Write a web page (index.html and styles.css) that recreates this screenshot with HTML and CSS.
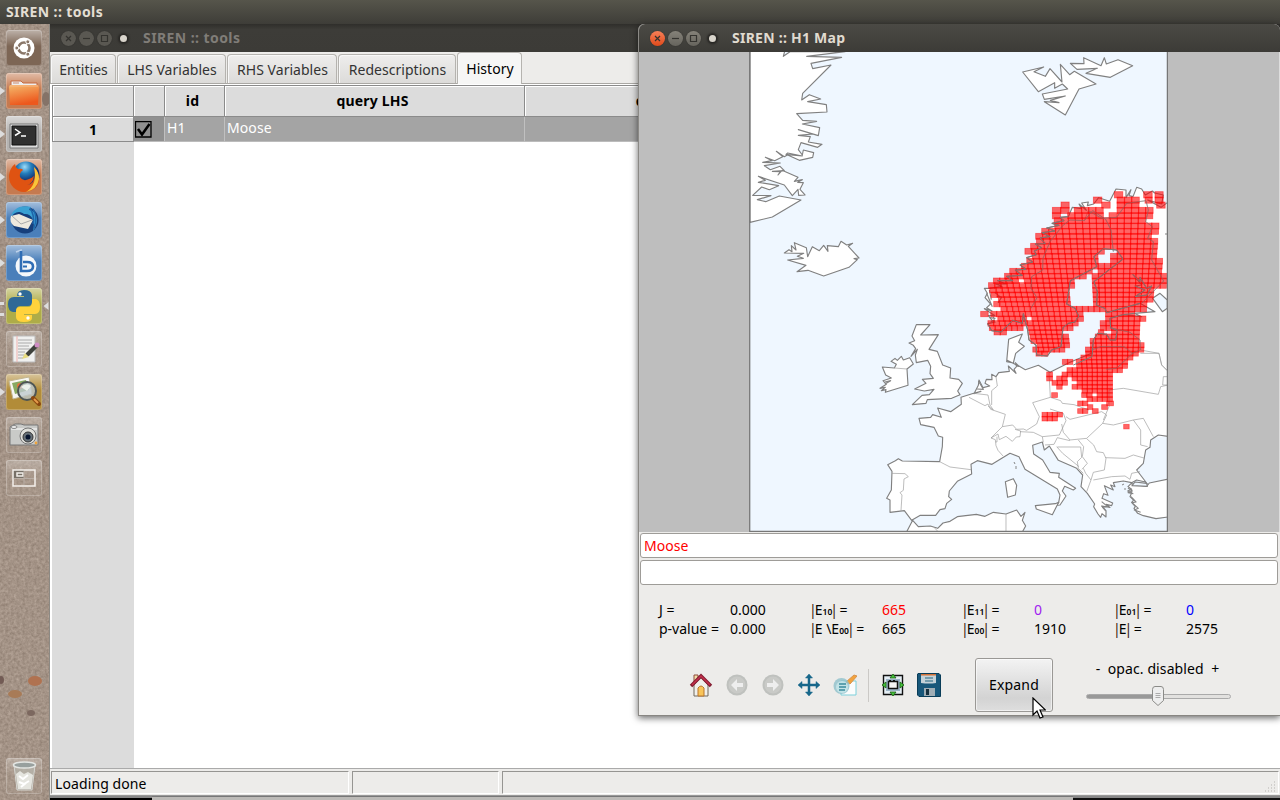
FILE: index.html
```html
<!DOCTYPE html>
<html lang="en">
<head>
<meta charset="utf-8">
<title>SIREN :: tools</title>
<link rel="stylesheet" href="styles.css">
</head>
<body>
<header class="panel">SIREN :: tools</header>
<div class="desktop">
  <nav class="launcher">
    <svg class="sand" width="49" height="776"><filter id="grain" x="0" y="0" width="100%" height="100%" color-interpolation-filters="sRGB"><feTurbulence type="fractalNoise" baseFrequency=".35" numOctaves="3" seed="4"/><feColorMatrix values=".2 0 0 0 .54  .2 0 0 0 .475  .2 0 0 0 .425  0 0 0 0 1"/></filter><rect width="49" height="776" filter="url(#grain)"/><g fill="#b07250"><ellipse cx="35" cy="657" rx="7" ry="5"/><ellipse cx="15" cy="670" rx="7" ry="4" fill="#a87b57"/><ellipse cx="31" cy="689" rx="4" ry="3" fill="#7c685f"/><ellipse cx="1" cy="656" rx="3" ry="4" fill="#725b54"/><ellipse cx="46" cy="75" rx="4" ry="7" fill="#857368"/></g></svg>
    <div class="tile dash"><svg viewBox="0 0 36 36"><circle cx="18" cy="18" r="10.5" fill="#fff"/><circle cx="18" cy="18" r="5.5" fill="none" stroke="#8a7769" stroke-width="2.6"/><path d="M18 18H11M18 18l4-6.5M18 18l4 6.5" stroke="#fff" stroke-width="1.3"/><g fill="#8a7769" stroke="#fff"><circle cx="10.8" cy="18" r="2"/><circle cx="21.8" cy="11.8" r="2"/><circle cx="21.8" cy="24.2" r="2"/></g></svg></div>
    <div class="tile orange run"><svg viewBox="0 0 36 36"><path d="M5 8h10l2 2h14v7H5z" fill="#eee" stroke="#c66b40"/><path d="M7 10h6" stroke="#cc8b70"/><path d="M3 14q0-2 2-2h26q2 0 2 2l-1 18H4z" fill="url(#fold)"/><path d="M4 13h28" stroke="#f8b787"/></svg></div>
    <div class="tile silver run"><svg viewBox="0 0 36 36"><path d="M4 8h28v24H4z" fill="#ddd" stroke="#777"/><path d="M6 10h24v19H6z" fill="#303030" stroke="#111"/><path d="M9 13l5 3.500-5 3M15 20h5" fill="none" stroke="#fff" stroke-width="1.5"/></svg></div>
    <div class="tile orange run"><svg viewBox="0 0 36 36"><circle cx="20" cy="16" r="13.500" fill="url(#globe)"/><path d="M9 5q0 3 3 5 4-1 5 1-4 3-3 7 3 5 9 2 3-1 5-3-1 8-7 9 8-1 8-12l-1-6q5 5 5 12c0 8-7 13-15 13S3 26 3 18c0-6 3-11 6-13z" fill="#df5312"/><path d="M28 8q5 5 5 12-2 11-13 13 12-7 8-25z" fill="#f8c53a"/></svg></div>
    <div class="tile blue run"><svg viewBox="0 0 36 36"><circle cx="19" cy="18" r="13.500" fill="#173f7b"/><path d="M5 15C7 5 17 3 25 5l-2 3c8 0 11 12 4 21 3-11-2-18-9-17C12 8 8 11 5 15z" fill="#3aa1d3"/><path d="M5 14l8-2 14 6-5 9-14-3Q3 20 5 14z" fill="#eee9de"/><path d="M6 14l9 8 11-4" fill="none" stroke="#aaa"/><path d="M27 7q5 8 1 19M24 6q5 8 3 16" fill="none" stroke="#1f65aa" stroke-width="1.5"/></svg></div>
    <div class="tile blue run"><svg viewBox="0 0 36 36"><circle cx="20" cy="21" r="10.500" fill="#f4f7fa"/><path d="M10 7l5-2v15" fill="none" stroke="#bdd2ea" stroke-width="1.500"/><path d="M15 6v20h6q6 0 6-4.500T21 17h-4" fill="none" stroke="#2f6db5" stroke-width="2.600"/><path d="M17 21.500h4" fill="none" stroke="#2f6db5" stroke-width="2"/></svg></div>
    <div class="tile olive run twin"><svg viewBox="0 0 36 36"><path d="M11 8q0-6 7-6t8 5v7q0 4-4 4h-8q-4 0-4 6H7q-5-1-5-8t6-7h10v-1h-7z" fill="#2f6997"/><path d="M26 11h4q4 1 4 8t-5 7H18v1h8v3q0 4-8 4t-8-5v-6q0-4 4-4h8q4 0 4-5z" fill="#ffd23c"/><circle cx="14" cy="6" r="1.700" fill="#fff"/><circle cx="22" cy="30" r="1.700" fill="#fff"/><path d="M42.500 14v8l-5-4z" fill="#ddd"/></svg></div>
    <div class="tile clear"><svg viewBox="0 0 36 36"><path d="M7 5h22v26H7z" fill="#f0f0ef" stroke="#bbb"/><path d="M11 5v26" stroke="#f0b3af"/><path d="M12 9h14M12 12h14M12 15h11M12 18h12M12 21h7M12 24h6M12 27h5" stroke="#aaa"/><path d="M17 27l3-5 9-9 3 3-9 9z" fill="#3e413c"/><path d="M16 28l3-6 4 4z" fill="#e8dc80"/><circle cx="31" cy="14" r="2.500" fill="#cf8dc4"/></svg></div>
    <div class="tile amber run"><svg viewBox="0 0 36 36"><path d="M3 7l20-4 3 17-19 5z" fill="#f7f7f2" stroke="#c2b691"/><path d="M6 9l14-3 3 10-14 4z" fill="#88a961"/><circle cx="14" cy="12" r="3" fill="#e4723a"/><circle cx="21" cy="17" r="9" fill="#bdc9cdc9" stroke="#4e5554" stroke-width="2"/><path d="M15 13q5-5 10-1l-4 5z" fill="#edf2eb"/><path d="M27 24l6 6" stroke="#8a470f" stroke-width="4" stroke-linecap="round"/><path d="M28 25l4 4" stroke="#e49b4a" stroke-width="2"/></svg></div>
    <div class="tile clear"><svg viewBox="0 0 36 36"><path d="M4 10l5-3h6l3 1h14v20H4z" fill="#c9cac8" stroke="#777"/><path d="M5 12h26" stroke="#fff"/><circle cx="22" cy="19" r="8" fill="#deded9" stroke="#777"/><circle cx="22" cy="20" r="5" fill="#667077" stroke="#333"/><circle cx="22" cy="20" r="2.500" fill="#06132c"/><circle cx="30" cy="26" r="1.400" fill="#f0a33a"/><ellipse cx="8" cy="10" rx="3" ry="1.500" fill="#eee" stroke="#888"/></svg></div>
    <div class="tile clear"><svg viewBox="0 0 36 36"><path d="M7 10h11v9H7z" fill="#777067"/><path d="M7 10h22v16H7zM11 13h6v3h-6z" fill="none" stroke="#f4f0eb" stroke-width="1.500"/><path d="M18 11v14M8 18.500h20" stroke="#b9aea5"/></svg></div>
    <div class="tile clear trash"><svg viewBox="0 0 36 36"><path d="M8 7l3 25h15l3-25" fill="#b9bbb3a0" stroke="#d5d5d0"/><path d="M10 16l4-3 4 3 4-2 5 3-2 14H12z" fill="#e5e5df"/><path d="M13 18l4 3 5-4M13 24l5 2 5-3M15 29l5-4" fill="none" stroke="#fff" stroke-width="2"/><ellipse cx="18.500" cy="7" rx="11" ry="3" fill="#98a09e" stroke="#e4e6e3" stroke-width="1.500"/></svg></div>
    <svg class="defs" width="0" height="0"><defs><linearGradient id="fold" x2=".3" y2="1"><stop stop-color="#f4b96c"/><stop offset="1" stop-color="#ed581d"/></linearGradient><radialGradient id="globe" cx=".45" cy=".2"><stop stop-color="#9edcf8"/><stop offset=".5" stop-color="#247dbb"/><stop offset="1" stop-color="#123878"/></radialGradient></defs></svg>
  </nav>

  <main class="tools">
    <div class="titlebar inactive">
      <span class="wb"><svg viewBox="0 0 15 15"><path d="M5 5l5 5M10 5l-5 5"/></svg></span><span class="wb"><svg viewBox="0 0 15 15"><path d="M4 7.500h7"/></svg></span><span class="wb"><svg viewBox="0 0 15 15"><path d="M4.500 4.500h6v6h-6z"/></svg></span><span class="dot"></span>
      <span class="caption">SIREN :: tools</span>
    </div>
    <div class="tabs"><span class="tab t1">Entities</span><span class="tab t2">LHS Variables</span><span class="tab t3">RHS Variables</span><span class="tab t4">Redescriptions</span><span class="tab t5 on">History</span></div>
    <section class="page">
      <div class="grid">
        <div class="h"></div><div class="h"></div><div class="h">id</div><div class="h">query LHS</div><div class="h">query RHS</div><div class="h"></div>
        <div class="rl">1</div><div class="c ck"><svg viewBox="0 0 17 17"><path d="M.5 .500h15.500v15.500H.5z" fill="none" stroke="#000" stroke-width="1.300"/><path d="M3 8l4 5.500L14.500 3" fill="none" stroke="#000" stroke-width="2.500"/></svg></div><div class="c">H1</div><div class="c">Moose</div><div class="c"></div><div class="c"></div>
      </div>
      <div class="gutter"></div>
    </section>
    <footer class="status"><span class="s1">Loading done</span><span class="s2"></span><span class="s3"><svg viewBox="0 0 12 12"><path d="M10 1h1M7 4h1m2 0h1M4 7h1m2 0h1m2 0h1M1 10h1m2 0h1m2 0h1m2 0h1" stroke="#b5b3b0"/></svg></span></footer>
    <div class="below"><i class="b1"></i><i class="b2"></i><i class="b3"></i></div>
  </main>
</div>

<section class="mapwin">
  <div class="titlebar">
    <span class="wb close"><svg viewBox="0 0 15 15"><path d="M5 5l5 5M10 5l-5 5"/></svg></span><span class="wb"><svg viewBox="0 0 15 15"><path d="M4 7.500h7"/></svg></span><span class="wb"><svg viewBox="0 0 15 15"><path d="M4.500 4.500h6v6h-6z"/></svg></span><span class="dot"></span>
    <span class="caption">SIREN :: H1 Map</span>
  </div>
  <div class="canvas">
    <svg class="map" width="419" height="480" viewBox="749 52 419 480">
      <rect x="749" y="52" width="419" height="480" fill="#eff7ff"/>
      <!-- Greenland, Iceland -->
      <g class="coast" transform="translate(745 50) scale(.33333)">
        <path d="M15 0H120L115 19L135 5H300L185 19L290 22L198 40L203 56L258 45L173 130L170 150L193 134L227 147L188 155L244 164L246 186L155 191L173 211L215 214L172 222L224 233L220 257L160 239L203 252L160 256L196 260L190 276L231 283L218 292L168 278L160 299L172 315L175 300L206 308L203 322L163 331L123 313L128 309L172 318L128 314L118 320L94 304L113 320L89 332L61 322L81 332L53 337L106 339L58 347L76 359L105 349L118 362L82 364L106 365L99 375L111 361L159 382L148 394L172 389L158 397L175 398L165 418L180 435L161 436L159 418L142 437L118 405L40 379L61 391L40 397L101 407L73 419L50 411L23 436L78 437L37 449L62 455L103 438L168 450L82 501L15 517Z"/>
        <path d="M118 609L132 599L141 605L139 587L153 600L148 578L184 593L188 620L202 590L223 602L236 586L249 604L247 587L280 590L288 574L305 585L323 580L310 589L342 624L327 626L337 629L312 652L236 678L189 661L156 665L183 646L128 630L175 625L157 619L176 610L118 609Z"/>
      </g>
      <!-- Svalbard -->
      <g class="coast" transform="translate(955 50) scale(.33333)">
        <path d="M203 66L266 51L237 65L271 79L285 56L321 96L316 43L344 74L358 64L423 102L372 117L331 195L268 155L312 158L286 151L331 138L268 148L262 132L338 117L322 102L299 115V98L250 125Z"/>
        <path d="M346 40L387 41L386 23L438 47L448 23L454 42L489 29L533 47L466 82L393 70L427 55L366 58Z"/>
      </g>
      <!-- Scandinavia and the Baltic -->
      <g class="coast" transform="translate(960 180) scale(.33333)">
        <path d="M700 66L622 68L603 82L563 60L605 72L610 45L584 39L577 33L556 45L545 27L530 22L519 50L507 47L513 29L498 53V30L468 27L449 64L416 53L401 72L382 77L385 66L365 69L379 91L357 72L365 86L337 82L325 110L300 112L312 122L276 130L297 136L260 144L285 153L246 158L270 170L240 174L256 191L226 192L245 203L223 213L229 224L200 233L218 246L180 255L198 268L166 270L187 286L140 289L158 302L113 302L139 312L107 312L126 319L91 325H73L82 340L75 353L92 372L80 383L96 393L73 386L105 407L85 407L101 427L83 431L95 452L123 456L158 421L187 430L190 401L203 450L207 480L228 495L230 525L262 528L275 510L303 500L309 443L325 430L345 426L356 408L345 385L320 372L331 302L410 260L402 230L430 206L470 210L489 237L402 305L412 335L410 376L435 385L440 398L540 370L585 395L523 400L545 410L490 404L450 415L452 443L472 452L467 480L450 480L440 463L413 460L400 480L396 530L365 555L360 580H700Z"/>
        <path d="M578 355L600 340L622 360V385L607 395Z" fill="#eff7ff"/>
        <path class="noedge" d="M400 540H700V770H560z"/>
        <g class="border"><path d="M213 385L231 353L213 325L215 290L248 270L249 235L270 185L307 138L330 120L373 122L398 92L437 118L453 150L460 215M373 122L385 92L425 115L470 112L500 70L558 62L565 90L557 125L577 140L563 175L580 185L575 240L611 303L545 370M450 443L510 457L540 480L541 510L517 520L492 500H422L395 510M517 520L470 565L438 568M541 510L597 520L605 555L622 572"/></g>
        <path class="lake" d="M518 283L540 305L540 292L560 325L575 318L561 345L525 350L555 330L525 318L545 315L518 283M88 330L94 359M80 340L97 380M89 413L105 415L92 427M100 410L105 429M104 337L124 353L114 369M110 349L126 351"/>
      </g>
      <!-- Mainland, British Isles, Africa -->
      <g class="coast" transform="translate(870 310) scale(.33333)">
        <path d="M665 130L600 157L540 187L505 166L466 179L443 166L432 178L438 190L415 168L418 184L386 188L378 200L365 193L366 209L349 208L345 220L359 228L339 233L327 210L325 226L312 251L333 244L311 250L273 262L274 283L242 305L203 294L214 322L188 314L182 322L147 325L152 344L192 352L205 378L218 382L217 410L209 455L97 453L85 446L76 452L53 464L66 484L64 540L50 565L60 570V607L103 602L125 631L151 616H197L210 599L225 596L230 580L245 568L236 560L238 543L262 514L305 492L303 463L322 452L366 463L420 430L447 440L465 478L562 537L570 555L566 578L557 586L570 585L588 558L577 543L584 529L610 540L617 535L566 502L568 490L540 487L518 450L491 432L488 406L517 396L523 420L538 408L565 451L620 475L638 495L633 530L652 550L674 582L671 590L684 612L692 622L696 611L708 621L708 602L695 588L720 592L708 583L725 587L728 579L696 565L701 551L714 556L703 527L730 540L722 525L735 530L730 518L760 513L785 518L800 510L826 516L832 522L800 480L820 460L827 420L840 412L842 390L865 375L900 380"/>
        <path d="M139 44H180L152 75L205 74L177 118L202 124L218 165L242 174L240 204L266 208L277 220L263 243L270 254L245 265L172 269L168 280L127 284L156 256L178 254L192 238L163 243L134 237L168 220L157 208L190 205L180 191L182 169L173 151L139 158L136 135L142 118L123 139L137 116L130 106L117 99L134 92L126 78Z"/>
        <path d="M63 154L75 145L82 151L94 139L100 150L119 143L130 162L111 177L114 226L46 247L48 239L34 242L46 232L30 235L49 223L39 212L64 204L47 195L37 171L73 174L79 163Z"/>
        <path d="M457 72L416 88L410 155L430 159L437 130L463 109L446 97ZM437 166L447 169L435 157M410 150L444 167"/>
        <path d="M406 515L430 506L440 526L436 555L413 562ZM496 587L556 581L566 577L547 614L499 597Z"/>
        <path d="M105 675L128 631L145 650L181 648L203 655L219 639L240 634L262 620L319 613L345 619L370 607L408 612L440 600L453 619L465 607L457 631L467 648L452 675Z"/>
        <path d="M774 530L783 521L830 529L838 519L900 506V620L858 626L820 617L803 610L792 595L796 590L785 577L791 570L780 560L785 548L773 543L785 538Z"/>
        <path d="M786 527L795 516L830 520L832 529Z" fill="#eff7ff"/>
        <path class="lake" d="M783 560L798 576L786 578L805 595L793 600L812 607M774 534L787 543L774 548L790 551M695 575L712 589L698 592L707 603M45 222L62 212L45 216M325 213L340 238L321 237"/>
        <g class="border"><path d="M66 490L105 491L115 500L102 507L100 541L90 548L96 555L93 602M209 455L240 471L303 479M297 262L345 287L354 282L362 298M311 250L354 255L360 285L370 300L354 288M378 200L382 228L365 242V285M362 298L406 313L397 350L363 384L376 389L378 407L384 421L399 438M381 380V396H377M397 350L428 345L440 358L460 357L470 361L500 342L508 320L488 278L541 262L537 187M363 384L384 372L388 389L408 379L427 394L439 381L450 380L452 363L435 358M450 365L490 367L517 380L520 397M517 380L568 375L588 332L580 310L540 297M541 262L572 272L577 280L612 284L657 300M575 342L580 367L600 390L650 385L698 340L710 315L695 305L600 328L588 320M525 405L552 403L562 383L600 392M562 411H632L635 442L622 455L625 475L640 490M560 410L578 430L627 470M625 390L641 410L637 440L652 460L636 478M650 386L671 405L680 425L700 428L708 445L703 480L670 487L663 510L647 490L640 475M663 510L650 545M706 443L765 445L790 435L825 445M790 330L820 325L850 380M698 340L730 345L790 330L812 360V405L833 410M670 510L725 500L765 498L780 508L785 490L810 485M717 240L760 235L865 253L872 230L895 225L878 225L880 200L900 200M700 330L717 290L717 240M408 612V675M193 653L209 670M73 174L111 177M811 130L867 130L875 165L892 182"/></g>
      </g>
      <path class="lake" d="M1014 462l1 2M1016 466v3M1122 485l2-1M1124 489h2M1165 234h3"/>
      <g id="cells" fill="#f00" fill-opacity=".6" stroke="#f00" stroke-opacity=".5" stroke-width=".8"></g>
      <g class="over" transform="translate(960 180) scale(.33333)"><path d="M325 110L300 112L312 122L276 130L297 136L260 144L285 153L246 158L270 170L240 174L256 191L226 192L245 203L223 213L229 224L200 233L218 246L180 255L198 268L166 270L187 286L140 289L158 302L113 302M83 431L95 452L123 456L158 421L187 430L190 401L203 450L207 480L228 495L230 525L262 528L275 510L303 500L309 443L325 430L345 426L356 408L345 385L320 372L331 302L410 260L402 230L430 206L470 210L489 237L402 305L412 335L410 376L435 385L440 398L540 370M523 400L490 404L450 415L452 443L472 452L467 480L450 480L440 463L413 460L400 480L396 530L340 555M518 283L540 305L540 292L560 325L575 318L561 345L525 350L555 330L525 318"/><path class="thin" d="M213 385L231 353L213 325L215 290L248 270L249 235L270 185L307 138L330 120L373 122L398 92L437 118L453 150L460 215M385 92L425 115L470 112L500 70L558 62L565 90L557 125L577 140L563 175L580 185L575 240L611 303L545 370M450 443L510 457L540 480L541 510L517 520L492 500H422L395 510M517 520L470 565L438 568"/></g>
      <path d="M749.700 52V531.300H1167.400V52" fill="none" stroke="#777" stroke-width="1.300"/>
    </svg>
  </div>
  <div class="field red">Moose</div>
  <div class="field second"></div>
  <div class="stats">
    <span>J =</span><span>0.000</span><span><b>|</b>E<sub>10</sub><b>|</b> =</span><span class="red">665</span><span><b>|</b>E<sub>11</sub><b>|</b> =</span><span class="purple">0</span><span><b>|</b>E<sub>01</sub><b>|</b> =</span><span class="bl">0</span>
    <span>p-value =</span><span>0.000</span><span><b>|</b>E \E<sub>00</sub><b>|</b> =</span><span>665</span><span><b>|</b>E<sub>00</sub><b>|</b> =</span><span>1910</span><span><b>|</b>E<b>|</b> =</span><span>2575</span>
  </div>
  <div class="bar">
    <div class="tool"><svg viewBox="0 0 24 24"><path d="M5 2h4v8H5z" fill="#f2e0aa" stroke="#8f4b3a"/><path d="M5 12l7-8 7 8v11H5z" fill="#f0f0ec" stroke="#71685d"/><path d="M2 13L12 3l10 10" fill="none" stroke="#811c31" stroke-width="3.400"/><path d="M3 12l9-9 9 9" fill="none" stroke="#c4304c" stroke-width="1.500"/><path d="M9 23v-8q3-4 6 0v8z" fill="#f8c459" stroke="#b9752d"/></svg></div>
    <div class="tool"><svg viewBox="0 0 24 24"><circle cx="12" cy="12" r="10.500" fill="#bfc1be"/><circle cx="12" cy="12" r="8.500" fill="#c9cac7"/><path d="M6 12l6-6v4h6v4h-6v4z" fill="#eee"/></svg></div>
    <div class="tool"><svg viewBox="0 0 24 24"><circle cx="12" cy="12" r="10.500" fill="#bfc1be"/><circle cx="12" cy="12" r="8.500" fill="#c9cac7"/><path d="M18 12l-6-6v4H6v4h6v4z" fill="#eee"/></svg></div>
    <div class="tool"><svg viewBox="0 0 24 24"><path d="M12 1l3.500 4H13v6h6V8.500l4 3.500-4 3.500V13h-6v6h2.500L12 23l-3.500-4H11v-6H5v2.500L1 12l4-3.500V11h6V5H8.500z" fill="#17678a" stroke="#17678a" stroke-width=".5"/></svg></div>
    <div class="tool"><svg viewBox="0 0 24 24"><path d="M8 8h15v14H8z" fill="#fbfcfc" stroke="#7dd0db"/><path d="M13 9l8-7 3 1-7 8z" fill="#f3a33d" stroke="#d79450"/><circle cx="8.500" cy="13" r="8" fill="#8fc1cb" opacity=".8"/><circle cx="9" cy="14" r="6" fill="#c2e3e7"/><path d="M6 11h7M6 14h7M6 17h6" stroke="#3b8c9d" stroke-width="1.500"/></svg></div>
    <i class="sep"></i>
    <div class="tool"><svg viewBox="0 0 24 24"><path d="M2.500 2.500h19v19h-19z" fill="#e5eef4" stroke="#111" stroke-width="1.400"/><path d="M5 6h14v12H5z" fill="#9cb5c8"/><path d="M7.500 8.500h9v7h-9z" fill="#f5f5f5" stroke="#111" stroke-width="1.500"/><path d="M8 8h2M12 8h2" stroke="#111" stroke-width="2"/><path d="M12 1l3 4H9zM12 23l3-4H9zM1 12l4-3v6zM23 12l-4-3v6z" fill="#47c43b" stroke="#165b13" stroke-width=".8"/></svg></div>
    <div class="tool"><svg viewBox="0 0 24 24"><path d="M1 .500h21l1.500 1.500v21.500H2L.5 22V1z" fill="#17577a" stroke="#0a3d58"/><path d="M4 1h15v9q-7 1-15 0z" fill="#c5d2d8"/><path d="M4 1h15v1.500H4z" fill="#d27137"/><path d="M8 5h8M8 8h8" stroke="#246781"/><path d="M7 15h11v8H7z" fill="#9fadb5"/><path d="M9 16h3v6H9z" fill="#16303e"/></svg></div>
    <button class="expand">Expand</button>
    <div class="opac"><span>-&nbsp; opac. disabled &nbsp;+</span><div class="slider"><i></i><svg viewBox="0 0 12 20"><path d="M.5 3.500Q.5.500 3 .500h6q2.500 0 2.500 3v11L6 19.500.5 14.500z" fill="#eee" stroke="#8b8b88"/><path d="M3.500 7.500h5M3.500 9.500h5M3.500 11.500h5" stroke="#aaa"/></svg></div></div>
  </div>
</section>
<svg class="cursor" viewBox="0 0 14 22"><path d="M1 1v17l4-4 3 7 3-1-3-7h5.500z" fill="#fff" stroke="#000" stroke-width="1.200"/></svg>
<script src="cells.js"></script>
</body>
</html>
```
FILE: styles.css
```css
*{box-sizing:border-box}
body{margin:0;width:1280px;height:800px;overflow:hidden;position:relative;font:14px/18px "Noto Sans","Open Sans",sans-serif;letter-spacing:.03px;color:#000;background:#98877a}
.panel{height:24px;padding:3px 6px;background:linear-gradient(#56554b,#3e3d38);color:#e3ded3;font-weight:700;font-size:14px;letter-spacing:.4px}
.desktop{display:flex;height:776px}
.launcher{width:49px;flex:none;position:relative;display:flex;flex-direction:column;align-items:flex-start;gap:7px;padding:6px 0 6px 6px}
.sand{position:absolute;left:0;top:0}
.defs{position:absolute}
.tile{position:relative;width:36px;height:36px;border-radius:3px;flex:none;box-shadow:inset 0 0 0 1px #ffffff38}
.tile::before{content:"";position:absolute;inset:0;border-radius:3px;background:linear-gradient(#ffffff80,#fff0 45%)}
.tile svg{display:block;width:36px;height:36px;position:relative;overflow:visible}
.dash{background:#7d6655}.orange{background:#c57a50}.silver{background:#b5b3b1}.blue{background:#4a7fba}.olive{background:#aeac48}.amber{background:#b28c38}.clear{background:#b9a99c35}
.run::after{content:"";position:absolute;left:-6px;top:14px;border:4px solid transparent;border-left:5px solid #ddd;border-right:0}
.twin::after{height:8px;width:4px;top:14px;border:0;border-top:3px solid #ddd;border-bottom:3px solid #ddd}
.clear::before{background:linear-gradient(#ffffff40,#fff0 45%)}
.trash{margin-top:auto}
.tools{flex:1;min-width:0;display:flex;flex-direction:column;background:#edecea;border-left:1px solid #8c8983}
.titlebar{display:flex;align-items:center;height:28px;flex:none;padding-left:11px;background:linear-gradient(#4b4a45,#3c3b37);color:#e0dbd0;font-weight:700;font-size:14px;letter-spacing:.25px;border-radius:6px 6px 0 0}
.inactive{color:#807d78;background:linear-gradient(#2f2e2b,#3d3c38 20%,#3c3b37);border-radius:0;letter-spacing:.42px}
.wb{width:15px;height:15px;border-radius:50%;margin-right:3px;background:linear-gradient(#858279,#66645d);box-shadow:0 0 1px #22211f}
.wb svg{display:block;fill:none;stroke:#34332f;stroke-width:1.200}
.inactive .wb{background:#5a5852}
.close{background:linear-gradient(#f88058,#df4a1b)}
.dot{width:7px;height:7px;margin:0 3px 0 5px;border-radius:50%;background:#d9d5cc;box-shadow:0 0 2px 2px #282724}
.caption{margin-left:13px}
.tabs{display:flex;align-items:flex-end;height:32px;border-bottom:1px solid #aaa8a4}
.tab{height:29px;padding:6px 0 0 1px;text-align:center;white-space:nowrap;border:1px solid #b5b3af;border-bottom:0;border-radius:4px 4px 0 0;background:linear-gradient(#eeedec,#dcdbd9);color:#333;margin-right:1px;box-shadow:inset 1px 1px #f8f8f8}
.t1{width:66px}.t2{width:109px}.t3{width:110px}.t4{width:118px}.t5{width:65px}
.tab.on{height:32px;margin-bottom:-1px;padding-top:7px;background:#f6f6f5;color:#000}
.page{flex:1;display:flex;flex-direction:column;padding:1px 2px 0;background:#fff;border-bottom:1px solid #aaa}
.grid{display:grid;grid-template-columns:82px 31px 60px 300px 300px 453px;grid-template-rows:32px 25px;width:1225px;overflow:hidden}
.h,.rl{background:#dcdcdc;border:1px solid #8b8b8b;border-width:1px 1px 1px 0;box-shadow:inset 1px 1px #fff;text-align:center;font-weight:700;padding:6px 4px 0 0;font-size:14px;letter-spacing:.2px;white-space:nowrap}
.h:first-child,.rl{border-left-width:1px}
.rl{border-top:0;padding:4px 0 0}
.c{background:#a4a4a4;color:#fff;border-right:1px solid #c0c0c0;border-bottom:1px solid #bcbcbc;padding:2px;letter-spacing:.1px}
.ck{background:#909090;padding:4px 1px}
.ck svg{width:17px;height:17px;display:block}
.gutter{flex:1;width:82px;background:#dcdcdc}
.status{display:flex;gap:3px;height:26px;padding:2px 1px 1px}
.status span{border:1px solid #969592;border-right-color:#fff;border-bottom-color:#fff;padding:3px 2px 0 3px;line-height:17px}
.s1{width:298px;letter-spacing:.1px}.s2{width:147px}.s3{flex:1;display:flex;justify-content:flex-end;align-items:flex-end}
.s3 svg{width:12px;height:12px;display:block}
.below{display:flex;height:5px;border-top:1px solid #999}
.below i{height:4px;background:#bcbab7;border-top:1px solid #777}
.below .b1{width:102px;background:#000;border-top:2px solid #888}.below .b2{width:921px}.below .b3{flex:1;background:#111;border-top:2px solid #888}
.mapwin{position:absolute;left:638px;top:24px;width:642px;height:692px;display:flex;flex-direction:column;background:#edecea;border-left:1px solid #8b8985;border-bottom:1px solid #888682;border-radius:6px 6px 0 0;box-shadow:0 2px 7px #0009}
.canvas{height:480px;flex:none;background:#bebebe;padding-left:110px;border-right:1px solid #ddd}
.map{display:block}
.coast{fill:#fff;stroke:#808080;stroke-width:3.400;stroke-linejoin:round}
.noedge{stroke:none}
.border{fill:none;stroke:#9c9c9c;stroke-width:2}
.lake{fill:none;stroke:#858585}
.over{fill:none;stroke:#807977;stroke-width:3}
.thin{stroke-width:1.600}
.field{height:25px;margin:1px 2px 0 1px;padding:3px;background:#fff;border:1px solid #9e9c98;border-radius:3px;letter-spacing:.05px}
.second{margin-top:2px}
.red{color:#f00}.purple{color:#a020f0}.bl{color:#00f}
.stats{display:grid;grid-template-columns:repeat(4,71px 81px);grid-auto-rows:19px;padding:16px 0 0 20px;height:72px;white-space:nowrap;letter-spacing:0}
.stats b{font-weight:400;color:#3b1a0d;margin:0 -2px}
sub{font-size:8.500px;font-weight:600;vertical-align:baseline;letter-spacing:0}
.bar{display:flex;align-items:center;height:56px;padding-left:44px}
.tool{width:36px;display:grid;place-items:center}
.tool svg{width:24px;height:24px;display:block}
.sep{width:1px;height:33px;margin:0 6px 0 5px;background:#cbc9c6}
.expand{width:78px;height:54px;margin:0 33px 0 28px;padding:0;font:inherit;letter-spacing:.15px;border:1px solid #9a9895;border-radius:3px;background:linear-gradient(#f3f3f3,#d3d3d3 75%,#dedede);box-shadow:inset 0 0 0 1px #ffffff90}
.opac{width:145px;text-align:center;white-space:nowrap;align-self:flex-start;padding:3px 2px 0 0;letter-spacing:.1px}
.slider{display:flex;position:relative;align-items:center;height:20px;margin-top:8px}
.slider i{width:145px;flex:none;height:5px;border-radius:3px;border:1px solid #aaa;background:linear-gradient(90deg,#999 50%,#e2e1df 50%)}
.slider svg{position:absolute;left:66px;width:12px;height:20px}
.cursor{position:absolute;left:1032px;top:697px;width:14px;height:22px}
```
FILE: cells.js
```js
// Each row: top edge followed by [start, end] spans, in thirds of a pixel.
const rows = [
  [35, [463,487],[551,575],[585,608]],
  [51, [400,424],[473,545],[555,575],[585,608]],
  [66, [303,326],[425,449],[471,545],[590,614]],
  [82, [277,326],[348,424],[471,568]],
  [98, [277,300],[325,424],[447,468],[471,568]],
  [113, [277,466],[471,555]],
  [129, [277,466],[471,591]],
  [145, [253,466],[471,591]],
  [160, [229,566]],
  [175, [229,582]],
  [190, [213,582]],
  [205, [196,435],[462,582]],
  [220, [213,420],[450,582]],
  [235, [192,412],[460,600]],
  [250, [175,412],[420,600]],
  [265, [153,400],[405,600]],
  [280, [133,375],[400,618]],
  [294, [93,172],[195,345],[398,618]],
  [308, [93,335],[398,618]],
  [322, [93,332],[398,575]],
  [336, [93,330],[398,575]],
  [350, [115,325],[398,575]],
  [364, [97,335],[398,555]],
  [379, [115,430],[435,555]],
  [394, [62,83],[100,205],[215,360],[432,520]],
  [408, [115,205],[213,362],[432,555]],
  [422, [85,350],[415,540]],
  [436, [85,187],[205,345],[415,540]],
  [449, [102,138],[205,310],[415,430],[450,540]],
  [462, [205,328],[398,540]],
  [475, [205,328],[398,540]],
  [488, [228,328],[398,553]],
  [501, [215,310],[383,553]],
  [513, [228,262],[383,540]],
  [525, [365,515]],
  [538, [307,337],[350,500]],
  [550, [350,500]],
  [563, [322,490]],
  [576, [260,276],[305,460]],
  [588, [260,276],[290,320],[335,460]],
  [601, [275,320],[350,460]],
  [613, [290,305],[335,460]],
  [625, [365,460]],
  [638, [275,291],[365,395],[412,460]],
  [650, [380,460]],
  [663, [353,382],[440,459]],
  [674, [382,397],[425,441]],
  [686, [353,382],[397,413]],
  [697, [247,305]],
  [709, [247,291]],
  [733, [491,506]]
];
const layer = document.getElementById('cells');
function cell(x, y, width, height) {
  const r = document.createElementNS('http://www.w3.org/2000/svg', 'rect');
  r.setAttribute('x', 960 + x / 3);
  r.setAttribute('y', 180 + y / 3);
  r.setAttribute('width', width / 3);
  r.setAttribute('height', height / 3);
  layer.appendChild(r);
}
for (const [y, ...spans] of rows) {
  // Columns share an origin and narrow towards the south.
  const pitch = y < 560 ? 22 - (y - 35) * 7 / 525 : 15;
  const height = 19 - y * 5 / 700;
  for (const [a, b] of spans) {
    if (b - a < pitch * 2.5) {
      const n = Math.max(1, Math.round((b - a) / pitch));
      for (let i = 0; i < n; i++) cell(a + i * (b - a) / n, y, (b - a) / n + 1.5, height);
      continue;
    }
    const first = Math.round((a - 471) / pitch);
    const last = Math.round((b - 471) / pitch);
    for (let k = first; k < last; k++) cell(471 + k * pitch, y, pitch + 1.5, height);
  }
}
```
